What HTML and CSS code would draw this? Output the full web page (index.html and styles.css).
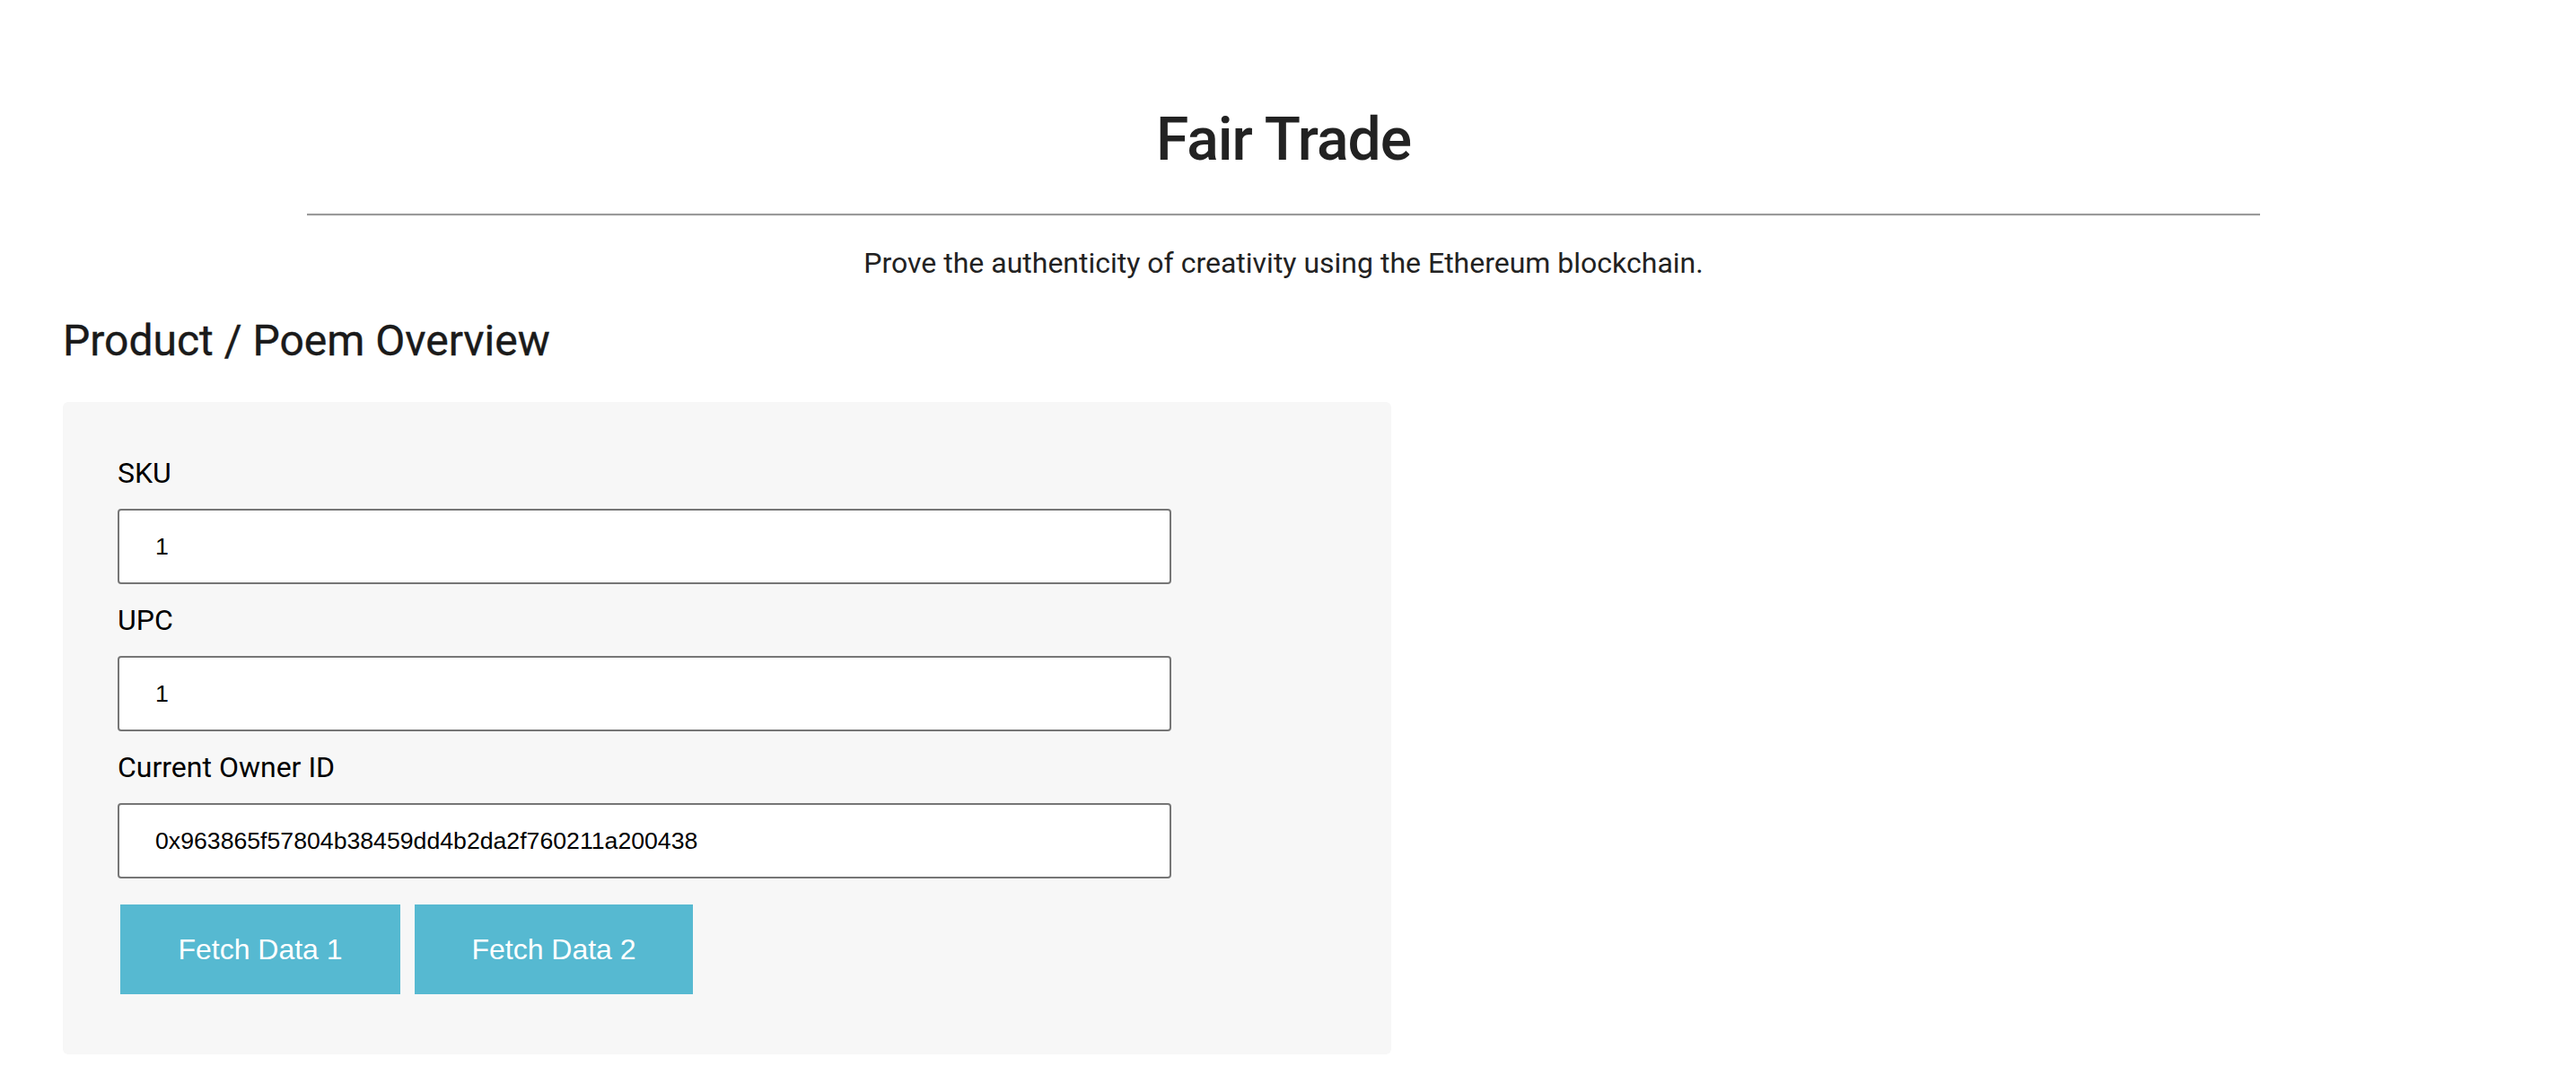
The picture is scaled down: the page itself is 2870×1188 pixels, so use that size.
FILE: index.html
```html
<!DOCTYPE html>
<html>
<head>
<meta charset="utf-8">
<title>Fair Trade</title>
<link rel="stylesheet" href="styles.css">
</head>
<body>
  <header class="header">
    <h1 class="title">Fair Trade</h1>
    <hr class="rule">
    <p class="subtitle">Prove the authenticity of creativity using the Ethereum blockchain.</p>
  </header>
  <main class="main">
    <h2 class="section-title">Product / Poem Overview</h2>
    <form class="card">
      <label class="field-label" for="sku">SKU</label>
      <input class="field-input" id="sku" type="text" value="1">
      <label class="field-label" for="upc">UPC</label>
      <input class="field-input" id="upc" type="text" value="1">
      <label class="field-label" for="owner">Current Owner ID</label>
      <input class="field-input field-input-last" id="owner" type="text" value="0x963865f57804b38459dd4b2da2f760211a200438">
      <div class="actions">
        <button class="btn" type="button">Fetch Data 1</button>
        <button class="btn btn-second" type="button">Fetch Data 2</button>
      </div>
    </form>
  </main>
</body>
</html>
```

FILE: styles.css
```css
html, body {
  margin: 0;
  padding: 0;
  background: #ffffff;
}

body {
  font-family: Roboto, "Liberation Sans", Arial, sans-serif;
  color: #222222;
}

.header {
  width: 2860px;
  display: flex;
  flex-direction: column;
  align-items: center;
  padding-top: 115px;
}

.title {
  margin: 0;
  font-size: 66px;
  line-height: 82px;
  font-weight: 500;
  letter-spacing: -1px;
  color: #222222;
}

.rule {
  width: 2176px;
  margin: 41px 0 0 0;
  border: 0;
  border-top: 2px solid #9a9a9a;
  border-bottom: 1px solid #eeeeee;
  height: 0;
}

.subtitle {
  margin: 33px 0 0 0;
  font-size: 32px;
  line-height: 38px;
  color: #222222;
}

.main {
  padding-left: 70px;
  padding-top: 40px;
}

.section-title {
  margin: 0;
  font-size: 48px;
  line-height: 56px;
  font-weight: 400;
  color: #1a1a1a;
  -webkit-text-stroke: 0.4px #1a1a1a;
}

.card {
  margin-top: 40px;
  width: 1480px;
  box-sizing: border-box;
  background: #f7f7f7;
  border-radius: 6px;
  padding: 60px 0 67px 61px;
  display: flex;
  flex-direction: column;
  align-items: flex-start;
}

.field-label {
  font-family: Roboto, "Liberation Sans", sans-serif;
  font-size: 32px;
  line-height: 38px;
  color: #000000;
  margin-bottom: 21px;
}

.field-input {
  box-sizing: border-box;
  width: 1174px;
  height: 84px;
  border: 2px solid #767676;
  border-radius: 4px;
  background: #ffffff;
  padding: 0 40px;
  font-family: "Liberation Sans", Arial, sans-serif;
  font-size: 26.67px;
  color: #000000;
  margin: 0 0 21px 0;
}

.field-input-last {
  margin-bottom: 29px;
}

.actions {
  display: flex;
  gap: 16px;
  margin-left: 3px;
}

.btn {
  width: 312px;
  height: 100px;
  border: 0;
  border-radius: 0;
  background: #56b9d1;
  color: #ffffff;
  font-family: "Liberation Sans", Arial, sans-serif;
  font-size: 32px;
  padding: 0;
}

.btn-second {
  width: 310px;
}
```
